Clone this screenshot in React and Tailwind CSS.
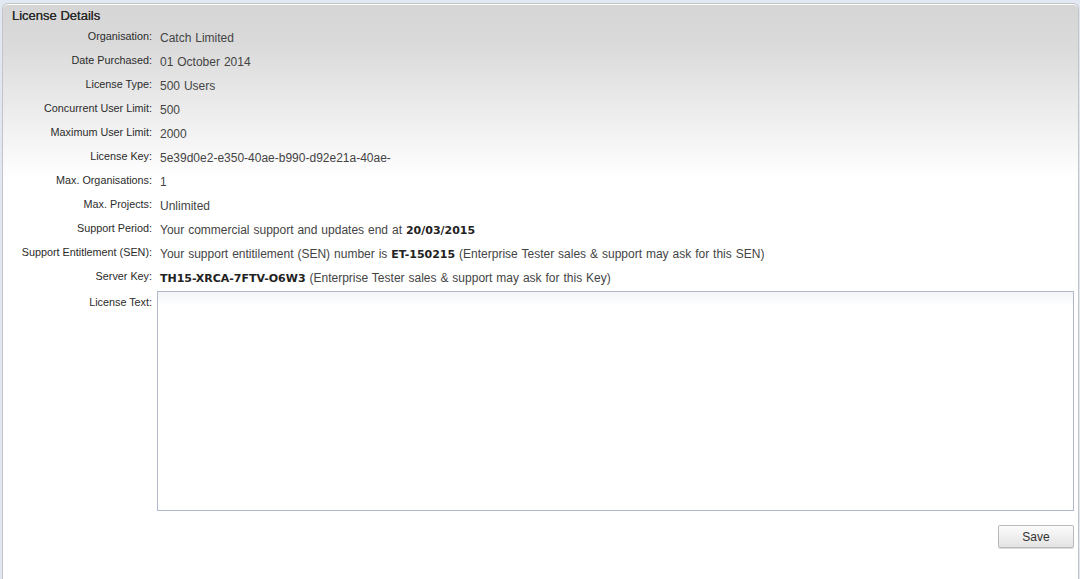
const rows = [
  { label: 'Organisation:', value: 'Catch Limited' },
  { label: 'Date Purchased:', value: '01 October 2014' },
  { label: 'License Type:', value: '500 Users' },
  { label: 'Concurrent User Limit:', value: '500' },
  { label: 'Maximum User Limit:', value: '2000' },
  { label: 'License Key:', value: '5e39d0e2-e350-40ae-b990-d92e21a-40ae-' },
  { label: 'Max. Organisations:', value: '1' },
  { label: 'Max. Projects:', value: 'Unlimited' },
  {
    label: 'Support Period:',
    value: (
      <>
        Your commercial support and updates end at <B>20/03/2015</B>
      </>
    ),
  },
  {
    label: 'Support Entitlement (SEN):',
    value: (
      <>
        Your support entitilement (SEN) number is <B>ET-150215</B> (Enterprise Tester sales &amp; support may ask for this SEN)
      </>
    ),
  },
  {
    label: 'Server Key:',
    value: (
      <>
        <B>TH15-XRCA-7FTV-O6W3</B> (Enterprise Tester sales &amp; support may ask for this Key)
      </>
    ),
  },
];

function B({ children }) {
  return <b className="font-bold text-[#222] text-[11px] [word-spacing:0] [font-family:'DejaVu_Sans',sans-serif]">{children}</b>;
}

function Label({ children, className = '' }) {
  return (
    <div className={`text-right text-[10.8px] leading-[20px] text-[#2b2b2b] whitespace-nowrap ${className}`}>
      {children}
    </div>
  );
}

export default function App() {
  return (
    <div className="h-[579px] w-[1080px] overflow-hidden bg-[#e1e8f2] pt-[3px] pl-[2px] pr-[1px] [font-family:'Liberation_Sans',Arial,sans-serif]">
      <div className="h-[590px] rounded-t-[6px] border border-[#c4c4c4] shadow-[inset_0_1px_0_#fff] bg-[linear-gradient(to_bottom,#d5d5d5_0px,#dadada_40px,#ffffff_175px)]">
        {/* Title */}
        <div className="h-[22px] pl-[9px] pt-[3px] text-[13px] leading-[18px] text-[#2a2a2a] [text-shadow:0_0_0.5px_#2a2a2a]">
          License Details
        </div>

        <div className="grid grid-cols-[149px_1fr] gap-x-[5px]">
          {rows.map((r) => (
            <div key={r.label} className="contents">
              <Label>{r.label}</Label>
              <div className="h-[24px] pl-[3px] text-[12px] leading-[24px] text-[#444] whitespace-nowrap [word-spacing:0.6px]">
                {r.value}
              </div>
            </div>
          ))}

          <Label className="pt-[2px]">License Text:</Label>
          <div className="pr-[4px]">
            <textarea
              className="mt-[1px] block h-[220px] w-full resize-none border border-[#b3b7cb] bg-[linear-gradient(to_bottom,#f2f4f6_0px,#ffffff_14px)] p-1 text-[12px] outline-none"
              defaultValue=""
            />
            <div className="mt-[14px] flex justify-end">
              <button className="h-[23px] w-[76px] rounded-[2px] border border-[#b9b9b9] bg-[linear-gradient(to_bottom,#fbfbfb,#e4e4e4)] text-[12px] text-[#333] shadow-[0_1px_0_#ddd]">
                Save
              </button>
            </div>
          </div>
        </div>
      </div>
    </div>
  );
}
